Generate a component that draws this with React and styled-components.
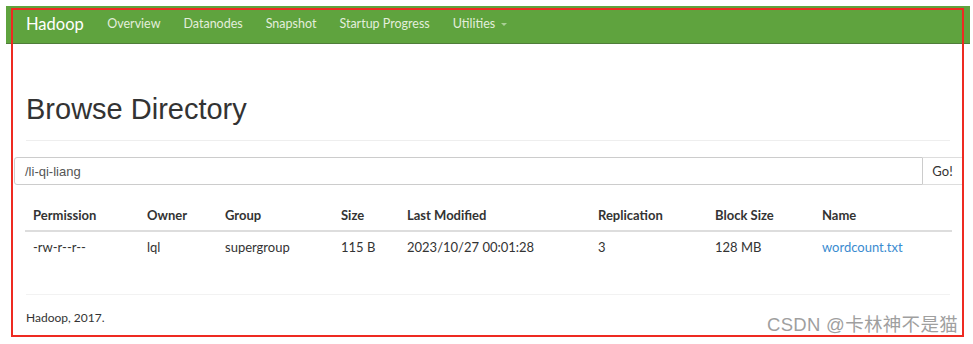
import React from "react";
import styled, { createGlobalStyle } from "styled-components";

const GlobalStyle = createGlobalStyle`
  html, body {
    margin: 0;
    padding: 0;
    background: #ffffff;
  }
  body {
    font-family: Lato, "Noto Sans", sans-serif;
    color: #333;
  }
`;

const Frame = styled.div`
  position: relative;
  width: 973px;
  height: 344px;
  overflow: hidden;
  padding: 6px 3px 0 6px;
  box-sizing: border-box;
`;

const NavBar = styled.nav`
  display: flex;
  align-items: center;
  height: 38px;
  box-sizing: border-box;
  padding: 0 0 2px 20px;
  background: #5fa33e;
  border-bottom: 1px solid #4f7d3a;
`;

const Brand = styled.span`
  font-size: 16.5px;
  color: #ffffff;
  margin-right: 12px;
`;

const NavLink = styled.span`
  display: flex;
  align-items: center;
  gap: 6px;
  font-size: 12.5px;
  color: #e3eedc;
  padding: 0 11.5px;
`;

const Caret = styled.span`
  width: 0;
  height: 0;
  border-left: 3px solid transparent;
  border-right: 3px solid transparent;
  border-top: 3px solid #a9cf95;
  margin-top: 2px;
`;

const Page = styled.div`
  padding: 0 0 0 8px;
`;

const Header = styled.div`
  margin: 49px 0 0 12px;
  padding-bottom: 15px;
  border-bottom: 1px solid #eeeeee;
  width: 924px;
`;

const Title = styled.h1`
  margin: 0;
  font-family: "Liberation Sans", Arial, sans-serif;
  font-weight: 400;
  font-size: 29px;
  line-height: 32px;
  color: #333;
`;

const InputGroup = styled.div`
  display: flex;
  margin-top: 16px;
  height: 28px;
  width: 949px;
  box-sizing: border-box;
`;

const PathInput = styled.div`
  flex: 1;
  display: flex;
  align-items: center;
  padding-left: 10px;
  border: 1px solid #cccccc;
  border-radius: 3px 0 0 3px;
  font-family: "Liberation Sans", Arial, sans-serif;
  font-size: 13px;
  color: #555;
`;

const GoButton = styled.div`
  width: 39px;
  display: flex;
  align-items: center;
  justify-content: center;
  border: 1px solid #dddddd;
  border-left: none;
  font-size: 13px;
  color: #333;
`;

const Table = styled.table`
  margin: 15px 0 0 11px;
  border-collapse: collapse;
  width: 927px;
  table-layout: fixed;
  font-size: 13px;
  line-height: 16px;
`;

const Th = styled.th`
  box-sizing: border-box;
  width: ${(p) => p.$w}px;
  text-align: left;
  font-weight: 700;
  padding: 7px 8px;
  border-bottom: 2px solid #dddddd;
  color: #333;
`;

const Td = styled.td`
  padding: 7px 8px;
  color: ${(p) => (p.$link ? "#3a8bd0" : "#333")};
`;

const Footer = styled.div`
  margin: 32px 0 0 12px;
  width: 924px;
  border-top: 1px solid #f2f2f2;
  padding-top: 16px;
  font-size: 12px;
  line-height: 14px;
  color: #333;
`;

const Annotation = styled.div`
  position: absolute;
  left: 11px;
  top: 8px;
  width: 953px;
  height: 329px;
  border: 2px solid #ee2a21;
  box-sizing: border-box;
  pointer-events: none;
`;

const Watermark = styled.div`
  position: absolute;
  right: 15px;
  top: 310px;
  font-family: "Liberation Sans", "Noto Sans CJK SC", sans-serif;
  font-size: 18.5px;
  color: #9f9f9f;
  letter-spacing: 0.3px;
`;

const columns = [
  ["Permission", 114],
  ["Owner", 78],
  ["Group", 116],
  ["Size", 66],
  ["Last Modified", 191],
  ["Replication", 117],
  ["Block Size", 107],
  ["Name", 138],
];

const row = ["-rw-r--r--", "lql", "supergroup", "115 B", "2023/10/27 00:01:28", "3", "128 MB", "wordcount.txt"];

export default function App() {
  return (
    <Frame>
      <GlobalStyle />
      <NavBar>
        <Brand>Hadoop</Brand>
        <NavLink>Overview</NavLink>
        <NavLink>Datanodes</NavLink>
        <NavLink>Snapshot</NavLink>
        <NavLink>Startup Progress</NavLink>
        <NavLink>
          Utilities <Caret />
        </NavLink>
      </NavBar>
      <Page>
        <Header>
          <Title>Browse Directory</Title>
        </Header>
        <InputGroup>
          <PathInput>/li-qi-liang</PathInput>
          <GoButton>Go!</GoButton>
        </InputGroup>
        <Table>
          <thead>
            <tr>
              {columns.map(([name, w]) => (
                <Th key={name} $w={w}>
                  {name}
                </Th>
              ))}
            </tr>
          </thead>
          <tbody>
            <tr>
              {row.map((v, i) => (
                <Td key={i} $link={i === row.length - 1}>
                  {v}
                </Td>
              ))}
            </tr>
          </tbody>
        </Table>
        <Footer>Hadoop, 2017.</Footer>
      </Page>
      <Annotation />
      <Watermark>CSDN @卡林神不是猫</Watermark>
    </Frame>
  );
}
